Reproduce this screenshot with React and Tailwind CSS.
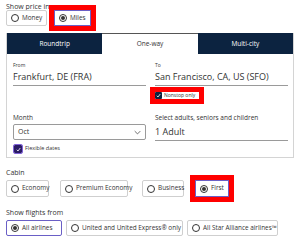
import React from "react";

function Radio({ checked }) {
  return (
    <span className="w-[8px] h-[8px] rounded-full border border-[#333] flex items-center justify-center shrink-0">
      {checked && <span className="w-[4px] h-[4px] rounded-full bg-[#333]" />}
    </span>
  );
}

function Red({ children, className = "" }) {
  return <div className={`border-[5px] border-[#ff0000] -m-[5px] shrink-0 ${className}`}>{children}</div>;
}

function Btn({ label, checked, w, h = "h-[16px]", square, className = "" }) {
  return (
    <div
      className={`${w} ${h} flex items-center gap-[3px] pl-[4px] border shrink-0 ${
        square ? "rounded-none" : "rounded-[2px]"
      } ${checked ? "border-[#6a5fc6]" : "border-[#cfcfcf]"} text-[6.4px] leading-none text-[#333] whitespace-nowrap ${className}`}
    >
      <Radio checked={checked} />
      <span>{label}</span>
    </div>
  );
}

function Check({ flexible }) {
  return (
    <span
      className={`${flexible ? "w-[8px] h-[8px]" : "w-[7px] h-[7px]"} rounded-[1px] flex items-center justify-center shrink-0 ${
        flexible ? "bg-[#2b1c66] outline-[1.5px] outline-solid outline-[#8062d8]" : "bg-[#0c2340]"
      }`}
    >
      <svg width="5" height="5" viewBox="0 0 10 10">
        <polyline points="1.5,5.5 4,8 8.5,2" fill="none" stroke="white" strokeWidth="1.6" />
      </svg>
    </span>
  );
}

export default function App() {
  return (
    <div className="w-[300px] h-[245px] bg-white overflow-hidden text-[#333] px-[6px] pt-[3px] font-['Open_Sans',sans-serif]">
      <div className="text-[7px] leading-[7px]">Show price in</div>
      <div className="flex gap-[7px]">
        <Btn label="Money" w="w-[41px]" />
        <Red>
          <Btn label="Miles" checked square w="w-[37px]" />
        </Red>
      </div>

      <div className="mt-[7px] w-[288px] h-[125px] border border-[#d4d4d4] border-t-0 flex flex-col">
        <div className="grid grid-cols-3 h-[21px] text-[6.5px]">
          <div className="bg-[#0c2340] text-white flex items-center justify-center">Roundtrip</div>
          <div className="bg-white border-t border-[#555] flex items-center justify-center">One-way</div>
          <div className="bg-[#0c2340] text-white flex items-center justify-center">Multi-city</div>
        </div>
        <div className="grid grid-cols-2 gap-x-[9px] pl-[6px] pr-[5px]">
          <div className="flex flex-col">
            <div className="mt-[9px] text-[5px] leading-[5px]">From</div>
            <div className="text-[9px] leading-[12px] pt-[3px] pb-[2px] border-b border-[#9a9a9a]">Frankfurt, DE (FRA)</div>
            <div className="mt-[28px] text-[6.5px] leading-[7px]">Month</div>
            <div className="mt-[3px] h-[16px] border border-[#9a9a9a] rounded-[2px] flex items-center justify-between pl-[4px] pr-[4px] text-[7px]">
              <span>Oct</span>
              <svg width="7" height="5" viewBox="0 0 10 6">
                <polyline points="1,1 5,5 9,1" fill="none" stroke="#333" strokeWidth="1" />
              </svg>
            </div>
            <div className="mt-[5px] ml-[1px] flex items-center gap-[3px] text-[5.5px] leading-none">
              <Check flexible />
              <span>Flexible dates</span>
            </div>
          </div>
          <div className="flex flex-col">
            <div className="mt-[9px] text-[5px] leading-[5px]">To</div>
            <div className="text-[9px] leading-[12px] pt-[3px] pb-[2px] border-b border-[#9a9a9a] whitespace-nowrap">San Francisco, CA, US (SFO)</div>
            <Red className="mt-[1px] self-start">
              <div className="w-[44px] h-[7px] flex items-center gap-[2px] text-[5px] leading-none whitespace-nowrap">
                <Check />
                <span>Nonstop only</span>
              </div>
            </Red>
            <div className="mt-[15px] text-[6.5px] leading-[7px] whitespace-nowrap">Select adults, seniors and children</div>
            <div className="text-[9px] leading-[12px] pt-[5px] pb-[2px] border-b border-[#9a9a9a]">1 Adult</div>
          </div>
        </div>
      </div>

      <div className="mt-[11px] text-[7px] leading-[8px]">Cabin</div>
      <div className="flex gap-[11px] mt-[3px]">
        <Btn label="Economy" w="w-[43px]" h="h-[17px]" />
        <Btn label="Premium Economy" w="w-[68px]" h="h-[17px]" />
        <Btn label="Business" w="w-[42px]" h="h-[17px]" className="ml-[3px]" />
        <Red>
          <Btn label="First" checked square w="w-[34px]" h="h-[17px]" />
        </Red>
      </div>

      <div className="mt-[12px] text-[7px] leading-[8px]">Show flights from</div>
      <div className="flex gap-[4px] mt-[3px]">
        <Btn label="All airlines" checked w="w-[56px]" h="h-[16px]" />
        <Btn label="United and United Express® only" w="w-[117px]" h="h-[16px]" />
        <Btn label="All Star Alliance airlines™" w="w-[91px]" h="h-[16px]" />
      </div>
    </div>
  );
}
